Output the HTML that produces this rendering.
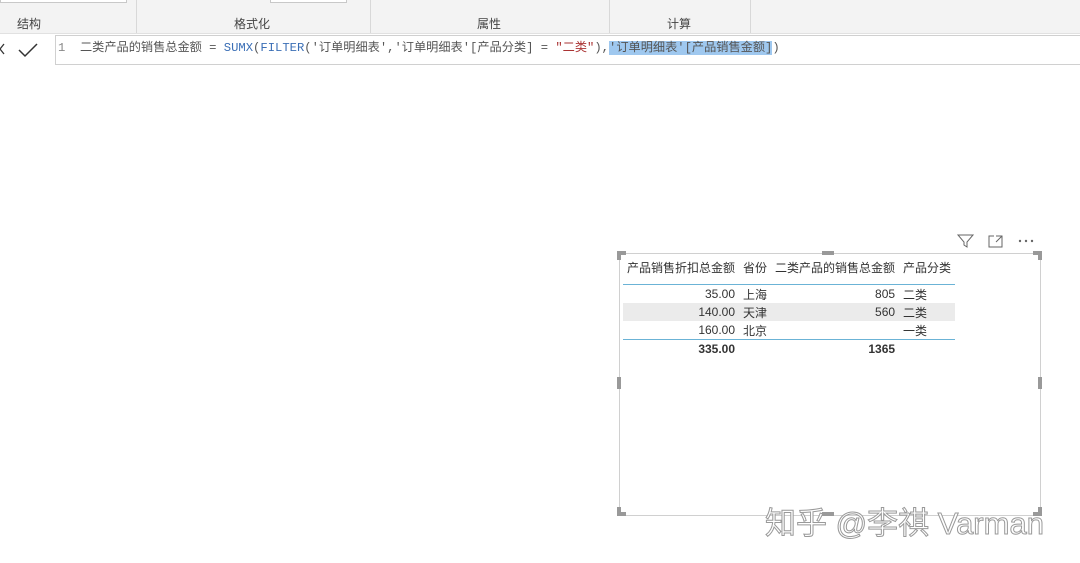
<!DOCTYPE html>
<html><head><meta charset="utf-8"><style>
body{margin:0;width:1080px;height:563px;background:#fff;position:relative;overflow:hidden;font-family:"Liberation Sans","Noto Sans CJK SC",sans-serif;}
.ab{position:absolute}
.rib{left:0;top:0;width:1080px;height:33px;background:#f3f3f3;border-bottom:1px solid #e1e1e1}
.sep{top:0;height:33px;width:1px;background:#d8d8d8}
.lbl{top:15px;font-size:12px;color:#444}
.fb{left:55px;top:35px;width:1025px;height:28px;border:1px solid #d0d0d0;border-right:none;background:#fff;font-family:"Liberation Mono","Noto Sans CJK SC",monospace;font-size:12.2px;line-height:24px;color:#555;white-space:nowrap}
table{border-collapse:collapse;font-size:12px;color:#333}
td{padding:0 4px;height:18px;white-space:nowrap}
.r{text-align:right}
</style></head><body>
<div class="ab rib"></div>
<div class="ab" style="left:0;top:0;width:125px;height:2px;border:1px solid #c8c8c8;border-top:none;background:#fff"></div>
<div class="ab" style="left:270px;top:0;width:75px;height:2px;border:1px solid #c8c8c8;border-top:none;background:#fff"></div>
<div class="ab sep" style="left:136px"></div>
<div class="ab sep" style="left:370px"></div>
<div class="ab sep" style="left:609px"></div>
<div class="ab sep" style="left:750px"></div>
<div class="ab lbl" style="left:17px">结构</div>
<div class="ab lbl" style="left:234px">格式化</div>
<div class="ab lbl" style="left:477px">属性</div>
<div class="ab lbl" style="left:667px">计算</div>
<svg class="ab" style="left:0;top:40px" width="50" height="20"><path d="M4 4 L0 9 L4 14" stroke="#333" fill="none" stroke-width="1.3"/><path d="M19 10 L25 16 L37 4" stroke="#333" fill="none" stroke-width="1.5"/></svg>
<div class="ab fb"><span style="color:#888;padding-left:2px">1</span>&nbsp; 二类产品的销售总金额 = <span style="color:#3b6fb6">SUMX</span>(<span style="color:#3b6fb6">FILTER</span>('订单明细表','订单明细表'[产品分类] = <span style="color:#a33">"二类"</span>),<span style="background:#9fc8ef">'订单明细表'[产品销售金额]</span>)</div>
<svg class="ab" style="left:955px;top:232px" width="85" height="18"><path d="M3 3 H18 L12 10 V15 L9 13 V10 Z" stroke="#666" fill="none"/><path d="M39 4 H34 V15 H47 V10" stroke="#666" fill="none"/><path d="M41 4 h6 v6 M47 4 L41 10" stroke="#666" fill="none"/><circle cx="65" cy="9" r="1.2" fill="#666"/><circle cx="71" cy="9" r="1.2" fill="#666"/><circle cx="77" cy="9" r="1.2" fill="#666"/></svg>
<div class="ab" style="left:619px;top:253px;width:420px;height:261px;border:1px solid #d0d0d0"></div>
<div class="ab" style="left:617px;top:251px;width:9px;height:4px;background:#999"></div><div class="ab" style="left:617px;top:251px;width:4px;height:9px;background:#999"></div>
<div class="ab" style="left:1033px;top:251px;width:9px;height:4px;background:#999"></div><div class="ab" style="left:1038px;top:251px;width:4px;height:9px;background:#999"></div>
<div class="ab" style="left:617px;top:512px;width:9px;height:4px;background:#999"></div><div class="ab" style="left:617px;top:507px;width:4px;height:9px;background:#999"></div>
<div class="ab" style="left:1033px;top:512px;width:9px;height:4px;background:#999"></div><div class="ab" style="left:1038px;top:507px;width:4px;height:9px;background:#999"></div>
<div class="ab" style="left:822px;top:251px;width:12px;height:4px;background:#999"></div>
<div class="ab" style="left:822px;top:512px;width:12px;height:4px;background:#999"></div>
<div class="ab" style="left:617px;top:377px;width:4px;height:12px;background:#999"></div>
<div class="ab" style="left:1038px;top:377px;width:4px;height:12px;background:#999"></div>
<table class="ab" style="left:623px;top:257px;width:332px">
<tr><td style="height:20px">产品销售折扣总金额</td><td>省份</td><td>二类产品的销售总金额</td><td>产品分类</td></tr>
<tr><td colspan="4" style="height:7px;border-bottom:1px solid #6bb3d6;padding:0"></td></tr>
<tr><td class="r">35.00</td><td>上海</td><td class="r">805</td><td>二类</td></tr>
<tr style="background:#ebebeb"><td class="r">140.00</td><td>天津</td><td class="r">560</td><td>二类</td></tr>
<tr style="border-bottom:1px solid #6bb3d6"><td class="r">160.00</td><td>北京</td><td></td><td>一类</td></tr>
<tr style="font-weight:bold"><td class="r">335.00</td><td></td><td class="r">1365</td><td></td></tr>
</table>
<div class="ab" style="left:765px;top:498px;font-size:31px;color:#fff;-webkit-text-stroke:1px #999;white-space:nowrap">知乎 @李祺 Varman</div>
</body></html>
